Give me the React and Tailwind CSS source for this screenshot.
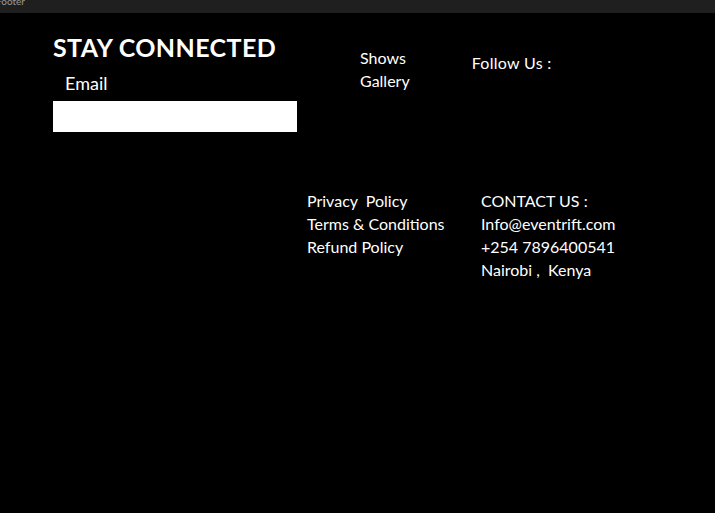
import React from 'react';

const font = { fontFamily: 'Lato, "Noto Sans", sans-serif' };

const Footer = () => {
  return (
    <div className="min-h-screen h-[513px] bg-black text-white overflow-hidden" style={font}>
      {/* editor label bar */}
      <div className="h-[13px] bg-[#1f1f1f] overflow-hidden">
        <span className="block -ml-[4px] -mt-[5px] text-[10px] leading-[12px] text-[#9a9a9a]">Footer</span>
      </div>

      {/* top row */}
      <div className="flex pt-[19px]">
        <div className="ml-[53px] w-[244px]">
          <h2 className="text-[25px] leading-[30px] font-bold tracking-[0.4px]">STAY CONNECTED</h2>
          <label className="block ml-[12px] mt-[10px] text-[18px] leading-[22px]">Email</label>
          <input type="text" className="block mt-[7px] w-[244px] h-[31px] bg-white text-black outline-none px-2" />
        </div>
        <div className="ml-[63px] pt-[14px] flex flex-col text-[16px] leading-[23px]">
          <a>Shows</a>
          <a>Gallery</a>
        </div>
        <div className="ml-[62px] pt-[19px] text-[16px] leading-[23px] tracking-[0.3px]">Follow Us :</div>
      </div>

      {/* bottom row */}
      <div className="flex pt-[57px] text-[16px] leading-[23px]">
        <div className="ml-[307px] w-[174px] flex flex-col">
          <a>Privacy&nbsp; Policy</a>
          <a>Terms &amp; Conditions</a>
          <a>Refund Policy</a>
        </div>
        <div className="flex flex-col">
          <span>CONTACT US :</span>
          <span>Info@eventrift.com</span>
          <span>+254 7896400541</span>
          <span>Nairobi ,&nbsp; Kenya</span>
        </div>
      </div>
    </div>
  );
};

export default function App() {
  return <Footer />;
}
